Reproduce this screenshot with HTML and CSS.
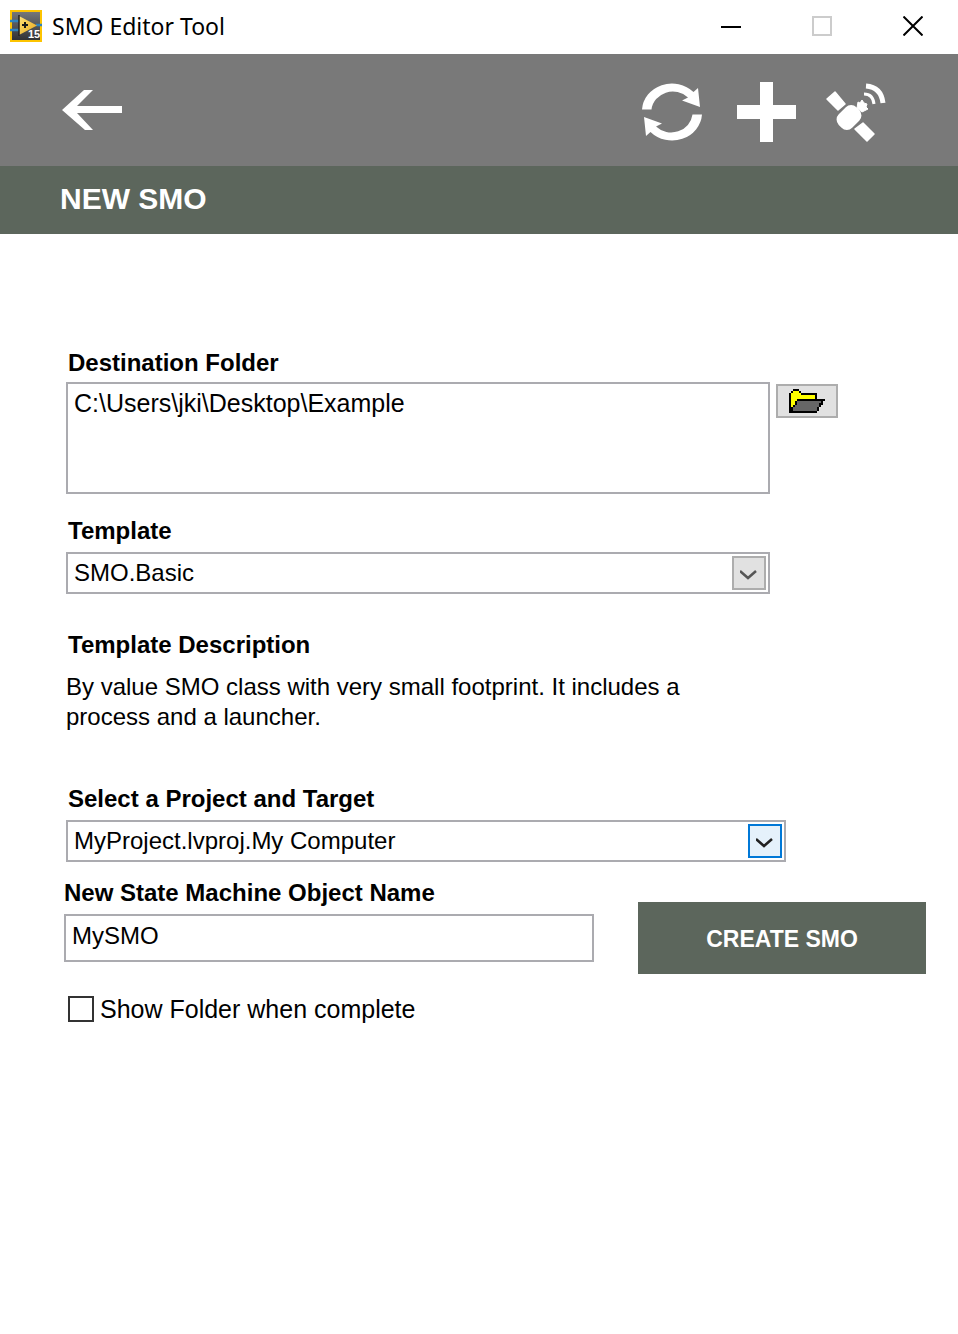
FILE: index.html
```html
<!DOCTYPE html>
<html lang="en">
<head>
<meta charset="utf-8">
<meta name="viewport" content="width=device-width, initial-scale=1">
<title>SMO Editor Tool</title>
<link rel="stylesheet" href="styles.css">
</head>
<body>
<header class="titlebar">
  <svg class="app-icon" viewBox="0 0 32 32" aria-hidden="true">
    <defs>
      <linearGradient id="panel" x1="0" y1="0" x2="0" y2="1"><stop offset="0" stop-color="#77797c"/><stop offset="1" stop-color="#2f3033"/></linearGradient>
      <linearGradient id="node" x1="0" y1="0" x2="1" y2="1"><stop offset="0" stop-color="#ffe27a"/><stop offset="1" stop-color="#e8a818"/></linearGradient>
    </defs>
    <rect x="1" y="1" width="30" height="30" fill="url(#panel)" stroke="#fdc400" stroke-width="2"/>
    <path d="M0 11h9M0 20h9M26 15h6" stroke="#2e83bd" stroke-width="2.500"/>
    <path d="M9 6L27 15.500L9 25z" fill="url(#node)"/>
    <path d="M9 5v21" stroke="#222" stroke-width="1.500"/>
    <path d="M12 15h6M15 12v6" stroke="#1a1a1a" stroke-width="2"/>
    <text class="app-icon-text" x="18" y="28">15</text>
  </svg>
  <h1 class="window-title">SMO Editor Tool</h1>
  <div class="window-controls">
    <button type="button" class="window-button" aria-label="Minimize"><svg class="window-glyph" viewBox="0 0 20 20"><path d="M0 11h20" stroke="#000" stroke-width="2"/></svg></button>
    <button type="button" class="window-button" aria-label="Maximize" disabled><svg class="window-glyph" viewBox="0 0 20 20"><rect x="1" y="1" width="18" height="18" fill="none" stroke="#ccc" stroke-width="2"/></svg></button>
    <button type="button" class="window-button" aria-label="Close"><svg class="window-glyph" viewBox="0 0 20 20"><path d="M.5.500l19 19M19.500.500l-19 19" stroke="#000" stroke-width="2"/></svg></button>
  </div>
</header>

<nav class="toolbar" aria-label="Tools">
  <button type="button" class="tool back" aria-label="Back">
    <svg width="60" height="46" viewBox="0 0 60 46"><path d="M0 21L22 1h9L15 17h45v7H15l16 17h-8z" fill="#fff"/></svg>
  </button>
  <button type="button" class="tool" aria-label="Refresh">
    <svg width="60" height="60" viewBox="0 0 60 60"><g id="arc"><path d="M0 27.500A30 28 0 0 1 51.500 10L56 6L58 25L40 18.500L46 15.500A21.500 20.500 0 0 0 9.500 27.500z" fill="#fff"/></g><use href="#arc" transform="rotate(180 30 30)"/></svg>
  </button>
  <button type="button" class="tool" aria-label="Add">
    <svg width="64" height="60" viewBox="0 0 64 60"><path d="M28 0h13v23h23v14H41v23H28V37H5V23h23z" fill="#fff"/></svg>
  </button>
  <button type="button" class="tool" aria-label="Satellite">
    <svg width="60" height="60" viewBox="0 0 60 60">
      <path d="M1 17l8-7 10 12-7 6zM37 41l11 11-7 7-12-12z" fill="#fff" stroke="#fff" stroke-width="1.500" stroke-linejoin="round"/>
      <rect x="10.500" y="26" width="25" height="19" rx="7.500" fill="#fff" transform="rotate(-45 23 35.500)"/>
      <path d="M32 20l2 1 2-3 2 3 3 1-1 3 2 2-4 2-2 1-5-4z" fill="#fff" stroke="#fff" stroke-linejoin="round"/>
      <path d="M38 12q9 0 10 10" fill="none" stroke="#fff" stroke-width="3"/>
      <path d="M40 4q15 1 17 17" fill="none" stroke="#fff" stroke-width="5"/>
    </svg>
  </button>
</nav>

<main>
  <h2 class="page-heading">NEW SMO</h2>
  <form class="form">
    <div class="field destination">
      <label class="label" for="folder">Destination Folder</label>
      <div class="path-row">
        <textarea class="control path" id="folder" spellcheck="false">C:\Users\jki\Desktop\Example</textarea>
        <button type="button" class="browse" aria-label="Browse for folder">
          <svg width="36" height="24" viewBox="0 0 18 12" shape-rendering="crispEdges">
            <path d="M0 2h1V1h1V0h3v1h1v1h8v3h4v1h-1v2h-1v1h-1v2h-1v1H0z" fill="#000"/>
            <path d="M1 2h1V1h3v1h1v1h7v2H4v1H3v2H2v1H1z" fill="#ff0"/>
            <path d="M4 6h12v1h-1v2h-1v2H2V9h1V8h1z" fill="#666"/>
          </svg>
        </button>
      </div>
    </div>

    <div class="field template">
      <label class="label" for="template">Template</label>
      <div class="select-box">
        <select class="control select" id="template"><option>SMO.Basic</option></select>
        <span class="drop" aria-hidden="true"><svg width="18" height="10" viewBox="0 0 18 10"><path d="M0 1l8 7 8-7" fill="none" stroke="#555" stroke-width="2.500"/></svg></span>
      </div>
    </div>

    <section class="description">
      <h3 class="label">Template Description</h3>
      <p class="description-text">By value SMO class with very small footprint. It includes a process and a launcher.</p>
    </section>

    <div class="field project">
      <label class="label" for="project">Select a Project and Target</label>
      <div class="select-box">
        <select class="control select" id="project"><option>MyProject.lvproj.My Computer</option></select>
        <span class="drop drop-active" aria-hidden="true"><svg width="18" height="10" viewBox="0 0 18 10"><path d="M0 1l8 7 8-7" fill="none" stroke="#222" stroke-width="2.500"/></svg></span>
      </div>
    </div>

    <div class="create-row">
      <div class="field name">
        <label class="label name-label" for="name">New State Machine Object Name</label>
        <input class="control name-input" id="name" type="text" value="MySMO" spellcheck="false">
      </div>
      <button type="button" class="create">CREATE SMO</button>
    </div>

    <label class="check"><input class="check-box" type="checkbox">Show Folder when complete</label>
  </form>
</main>
</body>
</html>
```
FILE: styles.css
```css
* { box-sizing: border-box; }

body {
  margin: 0;
  background: #fff;
  color: #000;
  font: 24px/30px "Liberation Sans", Arial, sans-serif;
}

button, input, select, textarea { font: inherit; color: inherit; border-radius: 0; }
button { padding: 0; border: 0; background: none; }
svg { display: block; }

.titlebar {
  display: flex;
  align-items: center;
  height: 54px;
  padding: 0 0 2px 10px;
}
.app-icon { width: 32px; height: 32px; }
.app-icon-text { font: bold 11px "Liberation Sans", Arial, sans-serif; fill: #fff; }
.window-title {
  flex: 1;
  margin: 0 0 0 10px;
  font: 23px/32px "Noto Sans", "Open Sans", sans-serif;
}
.window-controls { display: flex; gap: 1px; }
.window-button { display: grid; place-items: center; width: 90px; height: 52px; }
.window-glyph { width: 20px; height: 20px; }

.toolbar {
  display: flex;
  align-items: center;
  gap: 30px;
  height: 112px;
  padding: 4px 72px 0 62px;
  background: #797979;
}
.back { margin-right: auto; }

.page-heading {
  margin: 0;
  padding: 16px 60px 18px;
  background: #5c665c;
  color: #fff;
  font-size: 30px;
  line-height: 34px;
}

.form { padding: 114px 32px 40px 66px; }
.field { display: flex; flex-direction: column; gap: 6px; }
.label { margin: 0; padding-left: 2px; font-size: 24px; font-weight: bold; line-height: 30px; }
.control { border: 2px solid #ababb0; background: #fff; outline: 0; }

.destination { gap: 4px; padding-right: 88px; }
.path-row { display: flex; align-items: flex-start; gap: 6px; }
.path { flex: 1; min-width: 0; height: 112px; padding: 4px 6px; font-size: 25px; resize: none; }
.browse {
  display: grid;
  place-items: center;
  width: 62px;
  height: 34px;
  margin-top: 2px;
  border: 2px solid #adadad;
  background: #e1e1e1;
}

.template { margin-top: 22px; padding-right: 156px; }
.select-box { position: relative; }
.select {
  display: block;
  width: 100%;
  height: 42px;
  padding: 0 42px 0 6px;
  appearance: none;
}
.drop {
  position: absolute;
  top: 4px;
  right: 4px;
  display: grid;
  place-items: center;
  width: 34px;
  height: 34px;
  padding-top: 4px;
  border: 2px solid #adadad;
  background: #e1e1e1;
  pointer-events: none;
}
.drop-active { border-color: #0078d7; background: #e5f1fb; }

.description { margin-top: 36px; }
.description-text { max-width: 640px; margin: 12px 0 0; }

.project { margin-top: 52px; padding-right: 140px; }

.create-row {
  display: flex;
  align-items: flex-end;
  gap: 44px;
  margin: 16px 0 0 -2px;
}
.name { flex: 1; padding-bottom: 12px; }
.name-label { padding-left: 0; }
.name-input { width: 100%; height: 48px; padding: 0 6px 4px; }
.create {
  width: 288px;
  height: 72px;
  padding-top: 2px;
  background: #5c665c;
  color: #fff;
  font-size: 23px;
  font-weight: bold;
}

.check { display: flex; align-items: center; gap: 6px; margin: 20px 0 0 2px; font-size: 25px; }
.check-box {
  width: 26px;
  height: 26px;
  margin: 0;
  border: 2px solid #333;
  background: #fff;
  appearance: none;
}
.check-box:checked { background: #333; }
```
